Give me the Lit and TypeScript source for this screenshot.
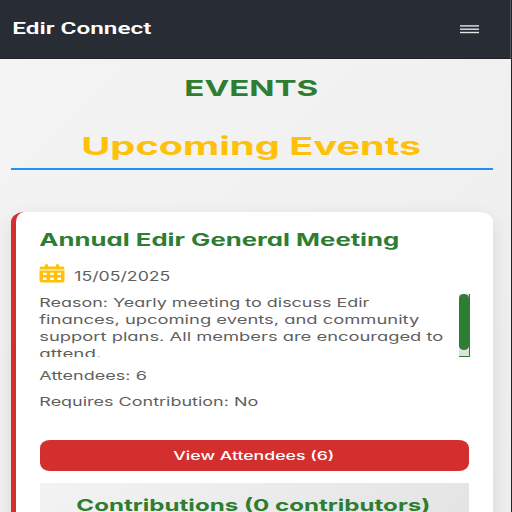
import { LitElement, html, css, svg } from "lit";
import { customElement, property } from "lit/decorators.js";

/** One line of expanded-width text, fitted to a given length. */
@customElement("wide-text")
class WideText extends LitElement {
  @property() text = "";
  @property({ type: Number }) length = 100;
  @property({ type: Number }) line = 17;
  @property({ type: Number }) baseline = 13;

  static styles = css`
    :host { display: block; flex: none; }
    svg { display: block; overflow: visible; }
    text { fill: currentColor; }
  `;

  render() {
    return html`<svg width=${this.length} height=${this.line}>
      ${svg`<text x="-0.7" y=${this.baseline} textLength=${this.length} lengthAdjust="spacingAndGlyphs">${this.text}</text>`}
    </svg>`;
  }
}

@customElement("event-card")
class EventCard extends LitElement {
  static styles = css`
    :host {
      display: block;
      box-sizing: border-box;
      height: 360px;
      margin: 42.4px 0 0;
      padding: 16.6px 24px 0 24px;
      background: #fff;
      border-left: 5px solid #d32f2f;
      border-radius: 13px 13px 0 0 / 10px 10px 0 0;
      box-shadow: 0 6px 20px rgba(0, 0, 0, 0.1);
      color: #5f5f5f;
      font-size: 12.2px;
    }
    .title { color: #2e7d32; font-size: 16.8px; font-weight: 650; }
    .date { display: flex; align-items: flex-start; gap: 9px; margin-top: 11px; height: 30px; font-size: 12.8px; }
    .calendar { display: block; width: 26px; height: 19px; margin: 0 0.5px 0 -1px; fill: #ffc107; }
    .reason { display: flex; justify-content: space-between; height: 63px; overflow: hidden; margin: 0 -1px 0 -2px; padding-left: 2px; }
    .track {
      box-sizing: border-box;
      width: 11px;
      height: 63px;
      background: #e0e0e0;
      border-right: 1px solid #2e7d32;
      border-bottom: 1px solid #2e7d32;
    }
    .thumb { width: 10px; height: 56px; border-radius: 5px / 4px; background: #2e7d32; }
    .facts { display: flex; flex-direction: column; gap: 9.5px; box-sizing: border-box; padding-top: 10px; height: 83px; }
    .action {
      display: flex;
      justify-content: center;
      box-sizing: border-box;
      width: 100%;
      height: 31px;
      padding: 7px 1px 0 0;
      border: 0;
      border-radius: 10px / 8px;
      background: #d32f2f;
      color: #fff;
      font: inherit;
      font-weight: 500;
    }
    .contributions {
      display: flex;
      justify-content: center;
      height: 69px;
      margin-top: 12px;
      padding: 11px 1px 0 0;
      box-sizing: border-box;
      background: linear-gradient(135deg, #f3f3f3, #e3e3e3);
      color: #2e7d32;
      font-size: 16.5px;
      font-weight: 650;
    }
  `;

  render() {
    const reason: [string, number][] = [
      ["Reason: Yearly meeting to discuss Edir", 330],
      ["finances, upcoming events, and community", 380],
      ["support plans. All members are encouraged to", 404],
      ["attend.", 62],
    ];
    return html`
      <wide-text class="title" text="Annual Edir General Meeting" length="360" line="24" baseline="17"></wide-text>
      <div class="date">
        <svg class="calendar" viewBox="0 0 26 19" fill-rule="evenodd">
          <path d="M6 1.2a1.5 1.2 0 0 1 3 0V2.4h8V1.2a1.5 1.2 0 0 1 3 0V2.4h3q2.5 0 2.5 1.8V5.5H.5V4.2Q.5 2.4 3 2.4h3z" />
          <path d="M.5 6.5h25v10q0 2-2.5 2H3q-2.5 0-2.5-2zM4 8.8v2.3h3.6V8.8zm7.2 0v2.3h3.6V8.8zm7.2 0v2.3H22V8.8zM4 13.6v2.3h3.6v-2.3zm7.2 0v2.3h3.6v-2.3zm7.2 0v2.3H22v-2.3z" />
        </svg>
        <wide-text text="15/05/2025" length="96" line="20" baseline="17"></wide-text>
      </div>
      <div class="reason">
        <div>
          ${reason.map(([t, w]) => html`<wide-text .text=${t} .length=${w} .line=${17} .baseline=${13}></wide-text>`)}
        </div>
        <div class="track"><div class="thumb"></div></div>
      </div>
      <div class="facts">
        <wide-text text="Attendees: 6" length="107.5" line="17" baseline="13"></wide-text>
        <wide-text text="Requires Contribution: No" length="219" line="17" baseline="13"></wide-text>
      </div>
      <button class="action">
        <wide-text text="View Attendees (6)" length="161" line="17" baseline="12.5"></wide-text>
      </button>
      <div class="contributions">
        <wide-text text="Contributions (0 contributors)" length="354" line="24" baseline="16.6"></wide-text>
      </div>
    `;
  }
}

@customElement("app-root")
class AppRoot extends LitElement {
  static styles = css`
    :host {
      display: block;
      box-sizing: border-box;
      width: 512px;
      height: 512px;
      overflow: hidden;
      border-right: 1px solid #242424;
      background: linear-gradient(135deg, #f4f4f4, #eeeeee);
      font-family: Inter, "Open Sans", sans-serif;
      font-feature-settings: "cv11";
    }
    header {
      display: flex;
      justify-content: space-between;
      align-items: flex-start;
      box-sizing: border-box;
      height: 59px;
      padding: 20px 31px 0 12.5px;
      background: #282c34;
      border-bottom: 1px solid #1f2228;
      border-right: 1px solid #55585d;
      color: #fff;
      font-family: Roboto, sans-serif;
      font-size: 16.5px;
      font-weight: 600;
    }
    .menu { display: block; width: 19px; height: 9px; margin-top: 4.7px; fill: #e4e4e5; }
    main { padding: 0 18px 0 11px; }
    .page { display: flex; justify-content: center; padding: 18px 1px 0 0; color: #2e7d32; font-size: 22px; font-weight: 650; }
    .section {
      display: flex;
      justify-content: center;
      box-sizing: border-box;
      height: 63px;
      padding-top: 25px;
      border-bottom: 2px solid #1e90ff;
      color: #ffc107;
      font-size: 24.6px;
      font-weight: 650;
    }
  `;

  render() {
    return html`
      <header>
        <wide-text text="Edir Connect" length="139" line="20" baseline="14"></wide-text>
        <svg class="menu" viewBox="0 0 19 9">
          <rect y="0.2" width="19" height="1.4" />
          <rect y="3.5" width="19" height="1.4" />
          <rect y="6.8" width="19" height="1.4" />
        </svg>
      </header>
      <main>
        <div class="page"><wide-text text="EVENTS" length="134" line="30" baseline="18.6"></wide-text></div>
        <div class="section"><wide-text text="Upcoming Events" length="340" line="34" baseline="22.5"></wide-text></div>
        <event-card></event-card>
      </main>
    `;
  }
}
